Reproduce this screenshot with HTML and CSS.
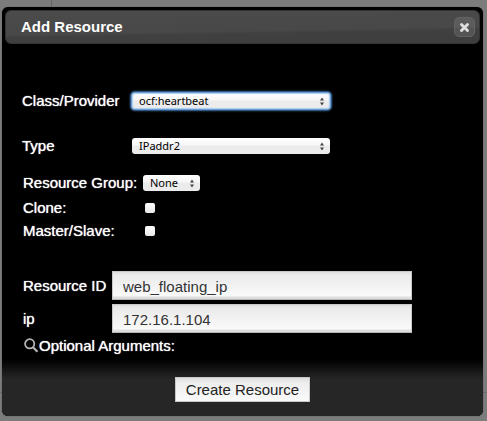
FILE: index.html
```html
<!DOCTYPE html>
<html lang="en">
<head>
<meta charset="utf-8">
<title>Add Resource</title>
<link rel="stylesheet" href="styles.css">
</head>
<body>
<section class="dialog" role="dialog" aria-labelledby="dialog-title">
  <header class="titlebar">
    <h1 class="title" id="dialog-title">Add Resource</h1>
    <button class="close" type="button" aria-label="Close">
      <svg width="11" height="11" viewBox="0 0 11 11" aria-hidden="true"><path d="M2.5 2.5l6 6M8.5 2.5l-6 6" stroke="#dedede" stroke-width="2.9" stroke-linecap="round"/></svg>
    </button>
  </header>
  <form class="form">
    <div class="group kind">
      <label for="provider">Class/Provider</label>
      <span class="picker focused">
        <select id="provider"><option>ocf:heartbeat</option></select>
        <svg class="arrows" width="6" height="9" viewBox="0 0 6 9" aria-hidden="true"><path d="M3 0.5l2 3H1zM3 8.500l-2-3h4z" fill="#444"/></svg>
      </span>
      <label for="type">Type</label>
      <span class="picker">
        <select id="type"><option>IPaddr2</option></select>
        <svg class="arrows" width="6" height="9" viewBox="0 0 6 9" aria-hidden="true"><path d="M3 0.5l2 3H1zM3 8.500l-2-3h4z" fill="#444"/></svg>
      </span>
    </div>
    <div class="group options">
      <label for="group">Resource Group:</label>
      <span class="picker">
        <select id="group"><option>None</option></select>
        <svg class="arrows" width="6" height="9" viewBox="0 0 6 9" aria-hidden="true"><path d="M3 0.5l2 3H1zM3 8.500l-2-3h4z" fill="#444"/></svg>
      </span>
      <label for="clone">Clone:</label>
      <input class="check" id="clone" type="checkbox">
      <label for="master">Master/Slave:</label>
      <input class="check" id="master" type="checkbox">
    </div>
    <div class="group values">
      <label for="rid">Resource ID</label>
      <input class="text" id="rid" type="text" value="web_floating_ip">
      <label for="ip">ip</label>
      <input class="text" id="ip" type="text" value="172.16.1.104">
    </div>
    <div class="optional">
      <svg width="16" height="16" viewBox="0 0 16 16" aria-hidden="true"><circle cx="6.7" cy="5.800" r="4.600" fill="none" stroke="#b4b4b4" stroke-width="1.800"/><path d="M10 9.200l4.500 4.500" stroke="#b4b4b4" stroke-width="2.200"/></svg>
      <span>Optional Arguments:</span>
    </div>
    <footer class="actions">
      <button class="create" type="button">Create Resource</button>
    </footer>
  </form>
</section>
</body>
</html>
```
FILE: styles.css
```css
* { box-sizing: border-box; }

body {
  margin: 0;
  padding: 7px 4px 4px 2px;
  background:
    linear-gradient(#646464, #646464) 51px 0 / 1px 8px no-repeat,
    linear-gradient(#6c6c6c, #6c6c6c) 0 392px / 100% 1px no-repeat,
    #7c7c7c;
  color: #fff;
  font: 15px/18px "Liberation Sans", Arial, sans-serif;
}

.dialog {
  overflow: hidden;
  border-radius: 6px;
  background: #000;
  box-shadow: 0 0 1px #333;
}

.titlebar {
  display: flex;
  align-items: center;
  justify-content: space-between;
  height: 34px;
  margin: 3px 3px 0;
  padding: 0 4px 0 15px;
  border: 1px solid #333;
  border-radius: 6px;
  background: linear-gradient(179deg, #4b4b4b 0%, #484848 60%, #404040 66%, #3e3e3e 100%);
}

.title {
  margin: 0;
  font-size: 15px;
  line-height: 18px;
}

.close {
  display: grid;
  place-items: center;
  width: 21px;
  height: 20px;
  padding: 0;
  border: 1px solid #626262;
  border-radius: 5px;
  background: linear-gradient(#5c5c5c 50%, #545454 55%);
}

.form { padding-top: 47px; }

.group {
  display: grid;
  align-items: center;
}

.group label, .optional { text-shadow: 0 0 1px #fff; }

.kind {
  grid-template-columns: 110px 198px;
  grid-auto-rows: 20px;
  row-gap: 25px;
  padding-left: 20px;
}

.options {
  grid-template-columns: 120px 57px;
  grid-template-rows: 24px 26px 20px;
  margin-top: 15px;
  padding-left: 21px;
}

.values {
  grid-template-columns: 89px 300px;
  grid-auto-rows: 29px;
  row-gap: 4px;
  margin-top: 30px;
  padding-left: 21px;
}

.picker {
  display: grid;
  align-items: center;
  height: 16px;
  border-radius: 3px;
  background: linear-gradient(#fff 0%, #f6f6f6 45%, #ebebeb 50%, #ececec 100%);
}

.picker > * { grid-area: 1 / 1; }

.picker select {
  width: 100%;
  height: 16px;
  padding: 0 7px;
  border: 0;
  outline: 0;
  appearance: none;
  background: none;
  color: #000;
  font: 11px/16px "Noto Sans", sans-serif;
}

.arrows {
  justify-self: end;
  margin-right: 5px;
  pointer-events: none;
}

.focused { box-shadow: inset 0 0 1px 1px #a9cdf0, 0 0 1px 1px #70a5dc, 0 0 2px 2px #3a6797; }

.check {
  justify-self: start;
  width: 10px;
  height: 10px;
  margin: 0 0 0 2px;
  border-radius: 2px;
  appearance: none;
  background: linear-gradient(#fff, #e8e8e8);
}

.text {
  width: 100%;
  height: 29px;
  padding: 1px 10px 0;
  border: 1px solid #c8c8c8;
  border-bottom-color: #b4b4b4;
  background: linear-gradient(#dedede 0, #eaeaea 3px, #fafafa 24px, #dedede 25px, #dedede 27px);
  color: #333;
  font: inherit;
}

.optional {
  display: flex;
  align-items: center;
  height: 18px;
  margin-top: 4px;
  padding-left: 21px;
}

.actions {
  display: flex;
  justify-content: center;
  margin-top: 4px;
  padding: 18px 0 14px;
  background: linear-gradient(#000, #262626 20px);
}

.create {
  height: 25px;
  padding: 0 10px;
  border: 1px solid #c8c8c8;
  background: linear-gradient(#dedede 0, #eee 5px, #fafafa 100%);
  color: #222;
  font: inherit;
}
```
